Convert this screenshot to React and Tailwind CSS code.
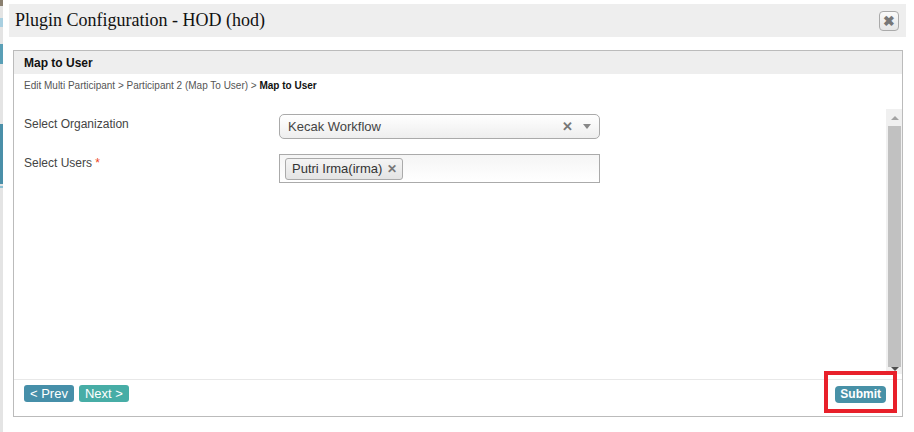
import { Fragment } from "react";

const sans = { fontFamily: '"Liberation Sans", Arial, sans-serif' };

function Scrollbar() {
  return (
    <div className="flex w-[16px] flex-col bg-[#f0f0f0] pl-[2px] pr-[1px]">
      <div className="flex h-[17px] items-center justify-center">
        <div className="h-0 w-0 border-x-[4px] border-b-[4px] border-x-transparent border-b-[#a3a3a3]" />
      </div>
      <div className="flex-1 bg-[#c1c1c1]" />
      <div className="flex h-[7px] items-start justify-center">
        <div className="h-0 w-0 border-x-[4px] border-t-[4px] border-x-transparent border-t-[#505050]" />
      </div>
    </div>
  );
}

export default function App() {
  return (
    <div className="relative flex h-[432px] w-[914px] bg-white text-[12px]" style={sans}>
      {/* page behind the dialog */}
      <div className="flex w-[3px] flex-col bg-[#e4e4e4]">
        <div className="h-[6px] bg-[#8a8070]" />
        <div className="mt-[12px] h-[9px] bg-[#a9cfe0]" />
        <div className="mt-[17px] h-[20px] bg-[#5a9fb6]" />
        <div className="mt-[60px] h-[60px] bg-[#4a8fa8]" />
        <div className="mt-[2px] h-[2px] bg-[#8cc1d4]" />
      </div>

      <div className="flex flex-1 flex-col pl-[6px] pr-[8px] pt-[4px]">
        <div className="flex h-[33px] items-center justify-between bg-[#eeeeee] pl-[6px] pr-[7px]">
          <span className="text-[18px] text-[#111]" style={{ fontFamily: '"Liberation Serif", "Times New Roman", serif' }}>
            Plugin Configuration - HOD (hod)
          </span>
          <button className="flex h-[20px] w-[20px] items-center justify-center rounded-[4px] border border-[#aaa] bg-gradient-to-b from-[#fafafa] to-[#e6e6e6] text-[14px] font-bold leading-none text-[#777]">
            ✖
          </button>
        </div>

        <div className="ml-[4px] mr-[3px] mt-[13px] flex h-[367px] flex-col border border-[#bbbbbb]">
          <div className="flex h-[23px] items-center bg-[#eeeeee] px-[10px] text-[12px] font-bold text-[#111]">
            Map to User
          </div>
          <div className="px-[10px] pt-[4px] text-[10px] text-[#555]">
            Edit Multi Participant &gt; Participant 2 (Map To User) &gt; <b className="text-[#111]">Map to User</b>
          </div>

          <div className="mt-[16px] flex h-[265px]">
            <div className="flex flex-1 flex-col gap-[15px] pl-[10px] pt-[5px]">
              <div className="flex items-start">
                <div className="w-[255px] pt-[1px] text-[12px] text-[#444]">Select Organization</div>
                <div className="flex h-[25px] w-[321px] items-center justify-between rounded-[5px] border border-[#aaa] bg-gradient-to-b from-white to-[#eeeeee] pl-[8px] pr-[8px] text-[13px] text-[#444]">
                  <span>Kecak Workflow</span>
                  <span className="flex items-center gap-[10px]">
                    <span className="text-[13px] font-bold text-[#777]">✕</span>
                    <span className="h-0 w-0 border-x-[4px] border-t-[5px] border-x-transparent border-t-[#888]" />
                  </span>
                </div>
              </div>
              <div className="flex items-start">
                <div className="w-[255px] text-[12px] text-[#444]">
                  Select Users <span className="text-[#e42]">*</span>
                </div>
                <div className="flex h-[29px] w-[321px] items-center border border-[#aaa] bg-gradient-to-b from-[#f5f5f5] to-white px-[5px]">
                  <span className="flex h-[22px] items-center gap-[5px] rounded-[3px] border border-[#aaa] bg-gradient-to-b from-[#f4f4f4] to-[#e4e4e4] pl-[6px] pr-[5px] text-[13px] text-[#333]">
                    Putri Irma(irma)
                    <span className="text-[12px] font-bold text-[#777]">✕</span>
                  </span>
                </div>
              </div>
            </div>
            <Scrollbar />
          </div>

          <div className="mt-[5px] flex flex-1 items-start justify-between border-t border-[#e8e8e8] pl-[10px] pr-[16px] pt-[5px]">
            <div className="flex gap-[5px]">
              <button className="h-[17px] rounded-[3px] bg-[#468fa9] px-[6px] text-[13px] leading-[17px] text-white">&lt; Prev</button>
              <button className="h-[17px] rounded-[3px] bg-[#47ada6] px-[6px] text-[13px] leading-[17px] text-white">Next &gt;</button>
            </div>
            <button className="mt-[1px] h-[17px] rounded-[4px] bg-[#4891a7] px-[5px] text-[12px] font-bold leading-[17px] text-white">Submit</button>
          </div>
        </div>
      </div>

      {/* annotation box over the submit button */}
      <div className="absolute left-[824px] top-[371px] h-[42px] w-[73px] border-[4px] border-[#e8202a]" />
    </div>
  );
}
